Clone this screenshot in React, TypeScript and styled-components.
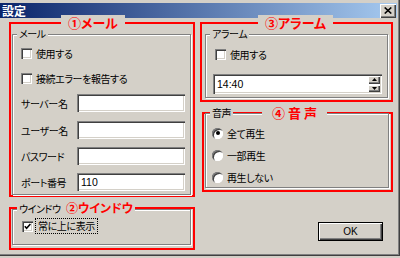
import React from 'react';
import styled, { createGlobalStyle } from 'styled-components';

const GlobalStyle = createGlobalStyle`
  html, body {
    margin: 0;
    padding: 0;
    background: #d4d0c8;
  }
  body {
    font-family: "Noto Sans CJK JP", "Liberation Sans", sans-serif;
  }
`;

const Window = styled.div`
  width: 400px;
  height: 256px;
  box-sizing: border-box;
  padding: 3px 3px 0 0;
  background: #d4d0c8;
  box-shadow: inset -1px -1px 0 #404040, inset -2px -2px 0 #808080;
  display: flex;
  flex-direction: column;
  overflow: hidden;
  color: #000;
  font-size: 10px;
  letter-spacing: -0.4px;
  font-feature-settings: "palt";
`;

const TitleBar = styled.div`
  height: 15px;
  flex: none;
  display: flex;
  align-items: center;
  justify-content: space-between;
  padding: 0 1px 0 2px;
  background: linear-gradient(to right, #0a246a, #a6caf0);
`;

const Title = styled.span`
  color: #fff;
  font-size: 12px;
  font-weight: bold;
  line-height: 15px;
  letter-spacing: 0;
`;

const CloseButton = styled.div`
  width: 16px;
  height: 14px;
  box-sizing: border-box;
  background: #d4d0c8;
  box-shadow: inset 1px 1px 0 #fff, inset -1px -1px 0 #404040, inset -2px -2px 0 #808080;
  display: flex;
  align-items: center;
  justify-content: center;
`;

const Body = styled.div`
  display: flex;
  gap: 5px;
  padding: 4px 4px 0 9px;
`;

const Column = styled.div<{ $width: number }>`
  width: ${p => p.$width}px;
  display: flex;
  flex-direction: column;
`;

const RedFrame = styled.div<{ $height: number; $pad: string; $mt?: number; $ml?: number }>`
  position: relative;
  box-sizing: border-box;
  height: ${p => p.$height}px;
  margin-top: ${p => p.$mt ?? 0}px;
  margin-left: ${p => p.$ml ?? 0}px;
  border: 2px solid #ff0000;
  padding: ${p => p.$pad};
  display: flex;
  flex-direction: column;
`;

const RedLabel = styled.span<{ $left: number; $size?: number; $spacing?: number; $pad?: string }>`
  position: absolute;
  z-index: 2;
  top: -9px;
  left: ${p => p.$left}px;
  padding: ${p => p.$pad ?? '0 7px'};
  background: #d4d0c8;
  color: #ff0000;
  font-weight: bold;
  font-size: ${p => p.$size ?? 13}px;
  letter-spacing: ${p => p.$spacing ?? 0}px;
  line-height: 16px;
  white-space: nowrap;
`;

const Group = styled.div<{ $pad: string; $mt?: number }>`
  position: relative;
  flex: 1;
  box-sizing: border-box;
  margin-top: ${p => p.$mt ?? 0}px;
  border: 1px solid #808080;
  box-shadow: inset 1px 1px 0 #fff, 1px 1px 0 #fff;
  padding: ${p => p.$pad};
  display: flex;
  flex-direction: column;
`;

const GroupLabel = styled.span`
  position: absolute;
  z-index: 1;
  top: -7px;
  left: 4px;
  padding: 0 2px;
  background: #d4d0c8;
  line-height: 12px;
  white-space: nowrap;
`;

const CheckRow = styled.label<{ $mt?: number; $ml?: number }>`
  display: flex;
  align-items: center;
  gap: 4px;
  height: 14px;
  margin-top: ${p => p.$mt ?? 0}px;
  margin-left: ${p => p.$ml ?? 0}px;
  white-space: nowrap;
`;

const CheckBox = styled.span`
  width: 11px;
  height: 11px;
  flex: none;
  box-sizing: border-box;
  background: #fff;
  box-shadow: inset 1px 1px 0 #808080, inset 2px 2px 0 #404040, inset -1px -1px 0 #fff, inset -2px -2px 0 #d4d0c8;
  display: flex;
  align-items: center;
  justify-content: center;
`;

const FocusText = styled.span`
  outline: 1px dotted #000;
  outline-offset: 1px;
  padding: 0 1px;
  line-height: 12px;
`;

const FieldRow = styled.div<{ $mt: number }>`
  display: flex;
  align-items: center;
  margin-top: ${p => p.$mt}px;
`;

const FieldLabel = styled.span`
  width: 56px;
  flex: none;
  white-space: nowrap;
`;

const TextBox = styled.div<{ $width: number; $height: number }>`
  position: relative;
  box-sizing: border-box;
  width: ${p => p.$width}px;
  height: ${p => p.$height}px;
  background: #fff;
  box-shadow: inset 1px 1px 0 #808080, inset 2px 2px 0 #404040, inset -1px -1px 0 #fff, inset -2px -2px 0 #d4d0c8;
  padding-left: 4px;
  display: flex;
  align-items: center;
  font-family: "Liberation Sans", "Noto Sans CJK JP", sans-serif;
  font-size: 10.5px;
  letter-spacing: 0;
`;

const SpinStack = styled.div`
  position: absolute;
  right: 2px;
  top: 2px;
  bottom: 2px;
  width: 12px;
  display: flex;
  flex-direction: column;
  gap: 1px;
`;

const SpinButton = styled.div`
  flex: 1;
  background: #d4d0c8;
  box-shadow: inset 1px 1px 0 #fff, inset -1px -1px 0 #404040, inset -2px -2px 0 #808080;
  display: flex;
  align-items: center;
  justify-content: center;
`;

const RadioRow = styled.label<{ $mt?: number }>`
  display: flex;
  align-items: center;
  gap: 4px;
  height: 12px;
  margin-top: ${p => p.$mt ?? 0}px;
  white-space: nowrap;
`;

const Radio = styled.span`
  width: 11px;
  height: 11px;
  flex: none;
  box-sizing: border-box;
  border-radius: 50%;
  background: #fff;
  box-shadow: inset 1px 1px 0 #808080, inset 2px 2px 0 #404040, inset -1px -1px 0 #fff;
  display: flex;
  align-items: center;
  justify-content: center;
`;

const RadioDot = styled.span`
  width: 4px;
  height: 4px;
  border-radius: 50%;
  background: #000;
`;

const ButtonRow = styled.div`
  display: flex;
  justify-content: flex-end;
  margin-top: 30px;
  padding-right: 10px;
`;

const PushButton = styled.div`
  width: 65px;
  height: 19px;
  box-sizing: border-box;
  border: 1px solid #000;
  background: #d4d0c8;
  box-shadow: inset 1px 1px 0 #fff, inset -1px -1px 0 #404040, inset -2px -2px 0 #808080;
  display: flex;
  align-items: center;
  justify-content: center;
  font-family: "Liberation Sans", sans-serif;
  font-size: 10px;
  letter-spacing: 0;
`;

const CheckMark = () => (
  <svg width="7" height="7" viewBox="0 0 7 7">
    <path d="M0.8 3.2 L2.6 5.2 L6.4 1" fill="none" stroke="#000" strokeWidth="1.6" />
  </svg>
);

const CloseGlyph = () => (
  <svg width="8" height="7" viewBox="0 0 8 7">
    <path d="M0.7 0.5 L7.3 6.5 M7.3 0.5 L0.7 6.5" stroke="#000" strokeWidth="1.6" />
  </svg>
);

const Arrow = ({ down }: { down?: boolean }) => (
  <svg width="5" height="3" viewBox="0 0 5 3">
    <polygon points={down ? '0,0 5,0 2.5,3' : '0,3 5,3 2.5,0'} fill="#000" />
  </svg>
);

const fields = [
  { label: 'サーバー名', value: '', mt: 9 },
  { label: 'ユーザー名', value: '', mt: 9 },
  { label: 'パスワード', value: '', mt: 8 },
  { label: 'ポート番号', value: '110', mt: 8 },
];

const sounds = [
  { label: '全て再生', checked: true },
  { label: '一部再生', checked: false },
  { label: '再生しない', checked: false },
];

const App = () => (
  <Window>
    <GlobalStyle />
    <TitleBar>
      <Title>設定</Title>
      <CloseButton>
        <CloseGlyph />
      </CloseButton>
    </TitleBar>
    <Body>
      <Column $width={186}>
        <RedFrame $height={175} $pad="10px 2px 0 1px">
          <RedLabel $left={50}>①メール</RedLabel>
          <Group $pad="11px 4px 0 8px">
            <GroupLabel>メール</GroupLabel>
            <CheckRow>
              <CheckBox />
              使用する
            </CheckRow>
            <CheckRow $mt={11}>
              <CheckBox />
              接続エラーを報告する
            </CheckRow>
            {fields.map(f => (
              <FieldRow key={f.label} $mt={f.mt}>
                <FieldLabel>{f.label}</FieldLabel>
                <TextBox $width={108} $height={18}>{f.value}</TextBox>
              </FieldRow>
            ))}
          </Group>
        </RedFrame>
        <RedFrame $height={43} $mt={10} $pad="0 2px 3px 1px">
          <RedLabel $left={50} $size={12} $pad="0 2px 0 5px">②ウインドウ</RedLabel>
          <Group $pad="9px 4px 0 9px">
            <GroupLabel>ウインドウ</GroupLabel>
            <CheckRow>
              <CheckBox>
                <CheckMark />
              </CheckBox>
              <FocusText>常に上に表示</FocusText>
            </CheckRow>
          </Group>
        </RedFrame>
      </Column>
      <Column $width={193}>
        <RedFrame $height={80} $pad="10px 3px 2px 3px">
          <RedLabel $left={56}>③アラーム</RedLabel>
          <Group $pad="12px 4px 0 7px">
            <GroupLabel>アラーム</GroupLabel>
            <CheckRow $ml={2}>
              <CheckBox />
              使用する
            </CheckRow>
            <FieldRow $mt={13}>
              <TextBox $width={169} $height={20}>
                14:40
                <SpinStack>
                  <SpinButton>
                    <Arrow />
                  </SpinButton>
                  <SpinButton>
                    <Arrow down />
                  </SpinButton>
                </SpinStack>
              </TextBox>
            </FieldRow>
          </Group>
        </RedFrame>
        <RedFrame $height={80} $mt={10} $ml={2} $pad="0 2px 2px 1px">
          <RedLabel $left={58} $spacing={3} $pad="0 7px 0 10px">④音声</RedLabel>
          <Group $pad="13px 4px 0 6px" $mt={-1}>
            <GroupLabel>音声</GroupLabel>
            {sounds.map((s, i) => (
              <RadioRow key={s.label} $mt={i === 0 ? 0 : 10}>
                <Radio>{s.checked && <RadioDot />}</Radio>
                {s.label}
              </RadioRow>
            ))}
          </Group>
        </RedFrame>
        <ButtonRow>
          <PushButton>OK</PushButton>
        </ButtonRow>
      </Column>
    </Body>
  </Window>
);

export default App;
